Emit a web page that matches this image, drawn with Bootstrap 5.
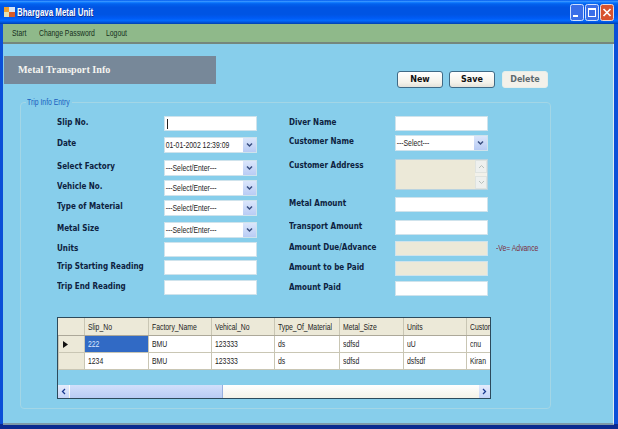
<!DOCTYPE html>
<html lang="en">
<head>
  <meta charset="UTF-8">
  <title>Bhargava Metal Unit</title>
  <link href="https://cdn.jsdelivr.net/npm/bootstrap@5.3.0/dist/css/bootstrap.min.css" rel="stylesheet">
  <style>
    body { margin: 0; background: #0a2a90; font-family: "Liberation Sans", Arial, sans-serif; }
    .app-win { width: 618px; height: 429px; overflow: hidden; background: linear-gradient(#0a4fd8 424px, #0a2a90 424px); }
    /* the source font is narrower than Arial */
    .sq { display: inline-block; transform: scaleX(.72); transform-origin: 0 50%; white-space: nowrap; }
    .title-strip { height: 24px; padding: 0 4px; color: #fff; font-size: 11px; font-weight: 700;
      background: linear-gradient(#0058ee 0, #3593ff 6%, #127dff 10%, #0262ee 16%, #0054e3 30%, #0054e3 60%, #005bf5 76%, #026afe 86%, #0052d6 94%, #0040ab 100%); }
    .title-name { margin-left: 2px; text-shadow: 1px 1px 0 #0f2f90; }
    .win-btn { display: block; width: 14px; height: 17px; margin-left: 1px; }
    .menu-strip { height: 20px; margin: 0 4px 0 3px; padding-left: 9px; background: #8fb98a; border-bottom: 2px solid #75877c; font-size: 9.5px; color: #16301c; }
    .menu-a { width: 27px; }
    .menu-b { width: 67px; }
    .main-pane { height: 381px; margin: 0 4px 0 3px; background: #87ceeb; border-right: 1px solid #dcebf2; border-bottom: 2px solid #7d99a8; padding-top: 12px; }
    .head-row { height: 41px; }
    .head-band { width: 212px; height: 28px; margin-left: 1px; padding-left: 14px; background: #778899; color: #f4f4f0; font-family: "Liberation Serif", serif; font-weight: 700; font-size: 10.2px; }
    .head-btns { margin-left: 181px; margin-top: 15px; gap: 6px; }
    .act-btn { width: 46px; height: 17px; padding: 0; line-height: 14px; font-family: "DejaVu Sans", sans-serif; font-size: 8px; font-weight: 700; color: #111; background: linear-gradient(#fff, #f4f2ea 70%, #e4e2da); border: 1px solid #3f6a86; border-radius: 3px; }
    .act-btn:disabled { opacity: 1; color: #5c6a70; background: #f3f1ea; border-color: #e6eeea; margin-left: 1px; }
    .group-box { width: 531px; height: 312px; margin: 0 0 0 17px; padding: 0 0 0 36px; border: 1px solid #a3d6e6; border-radius: 4px; }
    .group-box legend { float: none; width: 46px; margin: 0 0 0 -31px; padding: 0 1px; font-size: 9.5px; line-height: 10px; color: #1a5fc0; }
    .form-cols { margin-top: 9px; }
    .col-left { flex: none; width: 232px; display: grid; grid-template-rows: 21px 23px 20px 20px 22px 20px 18px 20px 16px; }
    .col-right { display: grid; grid-template-rows: 19px 24px 38px 23px 21px 20px 20px 16px; }
    .lbl-l { width: 107px; }
    .lbl-r { width: 106px; }
    .lbl-l, .lbl-r { flex: none; margin: 0; font-family: "DejaVu Sans", sans-serif; font-size: 8.2px; line-height: 13px; font-weight: 700; color: #0d2240; white-space: nowrap; transform: scaleX(.88); transform-origin: 0 50%; }
    .form-control.fld { flex: none; width: 93px; height: 15px; min-height: 0; padding: 0 2px; font-size: 8.5px; line-height: 13px; border: 1px solid #cfe3ec; border-radius: 0; color: #222; }
    .form-control.fld:disabled { background: #ece9d8; opacity: 1; }
    .fld-caret { background: linear-gradient(#222, #222) no-repeat 2px 2px / 1px 10px #fff !important; }
    .combo-fld { width: 93px; height: 16px; background: #fff; border: 1px solid #cfe3ec; font-size: 9.5px; color: #222; }
    .combo-txt { flex: 1; min-width: 0; padding-left: 1px; }
    .combo-arrow { flex: none; width: 13px; height: 14px; background: linear-gradient(#dbe6fb, #b9ccf5); }
    .addr-box { width: 93px; height: 31px; background: #ece9d8; border: 1px solid #b9d3df; }
    .addr-scroll { width: 12px; background: #f2f1ea; }
    .addr-arrow { height: 13px; background: #eef0ee; border: 1px solid #dfe3df; }
    .adv-note { margin-left: 8px; padding-bottom: 2px; font-size: 9.5px; color: #7c2b3a; }
    .grid-box { width: 434px; height: 82px; margin-top: 20px; background: #87ceeb; border: 1px solid #2c4a5c; overflow: hidden; }
    .grid-area { height: 67px; overflow: hidden; }
    .grid-tbl { width: 420px; table-layout: fixed; margin: 0; font-size: 9.5px; color: #222; --bs-table-bg: transparent; }
    .grid-tbl th, .grid-tbl td { height: 17px; padding: 0 0 0 3px; vertical-align: middle; white-space: nowrap; overflow: hidden; border: 1px solid #c9c6b4; font-weight: 400; line-height: 14px; }
    .grid-tbl th { background: #ece9d8; border-color: #ece9d8 #c9c6b4 #aca899 #ece9d8; }
    .grid-tbl td { background: #fff; }
    .grid-tbl .row-mark { background: #ece9d8; padding: 0 0 0 4px; }
    .grid-tbl .cell-on { background: #316ac5; color: #dbe8ff; }
    .grid-scroll { height: 13px; background: linear-gradient(#fff, #f4f2e8); }
    .scroll-end { width: 11px; background: linear-gradient(#e4ecfc, #c4d4f8); color: #1a3a90; }
    .scroll-thumb { width: 153px; margin-left: 1px; background: linear-gradient(#d2e0fb, #b9ccf4); border-right: 1px solid #98b0e0; }
  </style>
</head>
<body>

<div class="app-win d-flex flex-column">

  <!-- title bar -->
  <div class="title-strip d-flex align-items-center">
    <svg width="11" height="12" viewBox="0 0 11 12">
      <rect x="0" y="1" width="5" height="5" fill="#f0a030"/>
      <rect x="5" y="1" width="6" height="5" fill="#d8e4f4"/>
      <rect x="0" y="6" width="5" height="5" fill="#e8e0b0"/>
      <rect x="5" y="6" width="6" height="5" fill="#d85a28"/>
    </svg>
    <span class="title-name sq">Bhargava Metal Unit</span>
    <div class="ms-auto d-flex align-items-center">
      <svg class="win-btn" viewBox="0 0 14 17">
        <rect x=".5" y=".5" width="13" height="16" rx="2" fill="#3a6ee8" stroke="#cfe0ff"/>
        <rect x="3" y="11" width="5" height="2" fill="#fff"/>
      </svg>
      <svg class="win-btn" viewBox="0 0 14 17">
        <rect x=".5" y=".5" width="13" height="16" rx="2" fill="#3a6ee8" stroke="#cfe0ff"/>
        <rect x="3.5" y="4.5" width="7" height="8" fill="none" stroke="#fff"/>
        <rect x="3" y="4" width="8" height="2" fill="#fff"/>
      </svg>
      <svg class="win-btn" viewBox="0 0 14 17">
        <rect x=".5" y=".5" width="13" height="16" rx="2" fill="#d8532f" stroke="#f0d8d0"/>
        <path d="M3.5 5 10.5 12M10.5 5 3.5 12" stroke="#fff" stroke-width="1.7"/>
      </svg>
    </div>
  </div>

  <!-- menu -->
  <div class="menu-strip d-flex align-items-center">
    <div class="menu-a"><span class="sq">Start</span></div>
    <div class="menu-b"><span class="sq">Change Password</span></div>
    <div><span class="sq">Logout</span></div>
  </div>

  <div class="main-pane">
    <div class="head-row d-flex align-items-start">
      <div class="head-band d-flex align-items-center">Metal Transport Info</div>
      <div class="head-btns d-flex">
        <button type="button" class="btn act-btn">New</button>
        <button type="button" class="btn act-btn">Save</button>
        <button type="button" class="btn act-btn" disabled>Delete</button>
      </div>
    </div>

    <fieldset class="group-box">
      <legend><span class="sq">Trip Info Entry</span></legend>

      <div class="form-cols d-flex">
        <div class="col-left">
          <div class="d-flex align-items-start"><label class="lbl-l">Slip No.</label><input type="text" class="form-control fld fld-caret"></div>
          <div class="d-flex align-items-start"><label class="lbl-l">Date</label>
            <div class="combo-fld d-flex align-items-center"><span class="combo-txt sq">01-01-2002 12:39:09</span><span class="combo-arrow d-flex align-items-center justify-content-center"><svg width="7" height="6" viewBox="0 0 7 6"><path d="M1 1.5 3.5 4 6 1.5" fill="none" stroke="#3a4f80" stroke-width="1.5"/></svg></span></div></div>
          <div class="d-flex align-items-start"><label class="lbl-l">Select Factory</label>
            <div class="combo-fld d-flex align-items-center"><span class="combo-txt sq">---Select/Enter---</span><span class="combo-arrow d-flex align-items-center justify-content-center"><svg width="7" height="6" viewBox="0 0 7 6"><path d="M1 1.5 3.5 4 6 1.5" fill="none" stroke="#3a4f80" stroke-width="1.5"/></svg></span></div></div>
          <div class="d-flex align-items-start"><label class="lbl-l">Vehicle No.</label>
            <div class="combo-fld d-flex align-items-center"><span class="combo-txt sq">---Select/Enter---</span><span class="combo-arrow d-flex align-items-center justify-content-center"><svg width="7" height="6" viewBox="0 0 7 6"><path d="M1 1.5 3.5 4 6 1.5" fill="none" stroke="#3a4f80" stroke-width="1.5"/></svg></span></div></div>
          <div class="d-flex align-items-start"><label class="lbl-l">Type of Material</label>
            <div class="combo-fld d-flex align-items-center"><span class="combo-txt sq">---Select/Enter---</span><span class="combo-arrow d-flex align-items-center justify-content-center"><svg width="7" height="6" viewBox="0 0 7 6"><path d="M1 1.5 3.5 4 6 1.5" fill="none" stroke="#3a4f80" stroke-width="1.5"/></svg></span></div></div>
          <div class="d-flex align-items-start"><label class="lbl-l">Metal Size</label>
            <div class="combo-fld d-flex align-items-center"><span class="combo-txt sq">---Select/Enter---</span><span class="combo-arrow d-flex align-items-center justify-content-center"><svg width="7" height="6" viewBox="0 0 7 6"><path d="M1 1.5 3.5 4 6 1.5" fill="none" stroke="#3a4f80" stroke-width="1.5"/></svg></span></div></div>
          <div class="d-flex align-items-start"><label class="lbl-l">Units</label><input type="text" class="form-control fld"></div>
          <div class="d-flex align-items-start"><label class="lbl-l">Trip Starting Reading</label><input type="text" class="form-control fld"></div>
          <div class="d-flex align-items-start"><label class="lbl-l">Trip End Reading</label><input type="text" class="form-control fld"></div>
        </div>

        <div class="col-right">
          <div class="d-flex align-items-start"><label class="lbl-r">Diver Name</label><input type="text" class="form-control fld"></div>
          <div class="d-flex align-items-start"><label class="lbl-r">Customer Name</label>
            <div class="combo-fld d-flex align-items-center"><span class="combo-txt sq">---Select---</span><span class="combo-arrow d-flex align-items-center justify-content-center"><svg width="7" height="6" viewBox="0 0 7 6"><path d="M1 1.5 3.5 4 6 1.5" fill="none" stroke="#3a4f80" stroke-width="1.5"/></svg></span></div></div>
          <div class="d-flex align-items-start"><label class="lbl-r">Customer Address</label>
            <div class="addr-box d-flex justify-content-end">
              <div class="addr-scroll d-flex flex-column justify-content-between">
                <span class="addr-arrow d-flex align-items-center justify-content-center"><svg width="7" height="5" viewBox="0 0 7 5"><path d="M1 4 3.5 1.5 6 4" fill="none" stroke="#b8c0bc"/></svg></span>
                <span class="addr-arrow d-flex align-items-center justify-content-center"><svg width="7" height="5" viewBox="0 0 7 5"><path d="M1 1 3.5 3.5 6 1" fill="none" stroke="#b8c0bc"/></svg></span>
              </div>
            </div></div>
          <div class="d-flex align-items-start"><label class="lbl-r">Metal Amount</label><input type="text" class="form-control fld"></div>
          <div class="d-flex align-items-start"><label class="lbl-r">Transport Amount</label><input type="text" class="form-control fld"></div>
          <div class="d-flex align-items-start"><label class="lbl-r">Amount Due/Advance</label><input type="text" class="form-control fld" disabled><span class="adv-note sq">-Ve= Advance</span></div>
          <div class="d-flex align-items-start"><label class="lbl-r">Amount to be Paid</label><input type="text" class="form-control fld" disabled></div>
          <div class="d-flex align-items-start"><label class="lbl-r">Amount Paid</label><input type="text" class="form-control fld"></div>
        </div>
      </div>

      <!-- data grid -->
      <div class="grid-box d-flex flex-column">
        <div class="grid-area">
          <table class="table grid-tbl">
            <colgroup><col style="width:26px"><col style="width:64px"><col style="width:63px"><col style="width:63px"><col style="width:65px"><col style="width:64px"><col style="width:63px"><col style="width:51px"></colgroup>
            <thead>
              <tr><th></th><th><span class="sq">Slip_No</span></th><th><span class="sq">Factory_Name</span></th><th><span class="sq">Vehical_No</span></th><th><span class="sq">Type_Of_Material</span></th><th><span class="sq">Metal_Size</span></th><th><span class="sq">Units</span></th><th><span class="sq">Customer</span></th></tr>
            </thead>
            <tbody>
              <tr><td class="row-mark"><svg width="5" height="7" viewBox="0 0 5 7"><path d="M0 0 5 3.5 0 7Z" fill="#111"/></svg></td><td class="cell-on"><span class="sq">222</span></td><td><span class="sq">BMU</span></td><td><span class="sq">123333</span></td><td><span class="sq">ds</span></td><td><span class="sq">sdfsd</span></td><td><span class="sq">uU</span></td><td><span class="sq">cnu</span></td></tr>
              <tr><td class="row-mark"></td><td><span class="sq">1234</span></td><td><span class="sq">BMU</span></td><td><span class="sq">123333</span></td><td><span class="sq">ds</span></td><td><span class="sq">sdfsd</span></td><td><span class="sq">dsfsdf</span></td><td><span class="sq">Kiran</span></td></tr>
            </tbody>
          </table>
        </div>
        <div class="grid-scroll d-flex">
          <span class="scroll-end d-flex align-items-center justify-content-center"><svg width="5" height="7" viewBox="0 0 5 7"><path d="M4 1 1.5 3.5 4 6" fill="none" stroke="#1a3a90" stroke-width="1.3"/></svg></span>
          <span class="scroll-thumb"></span>
          <span class="scroll-end ms-auto d-flex align-items-center justify-content-center"><svg width="5" height="7" viewBox="0 0 5 7"><path d="M1 1 3.5 3.5 1 6" fill="none" stroke="#1a3a90" stroke-width="1.3"/></svg></span>
        </div>
      </div>
    </fieldset>
  </div>

</div>

</body>
</html>
